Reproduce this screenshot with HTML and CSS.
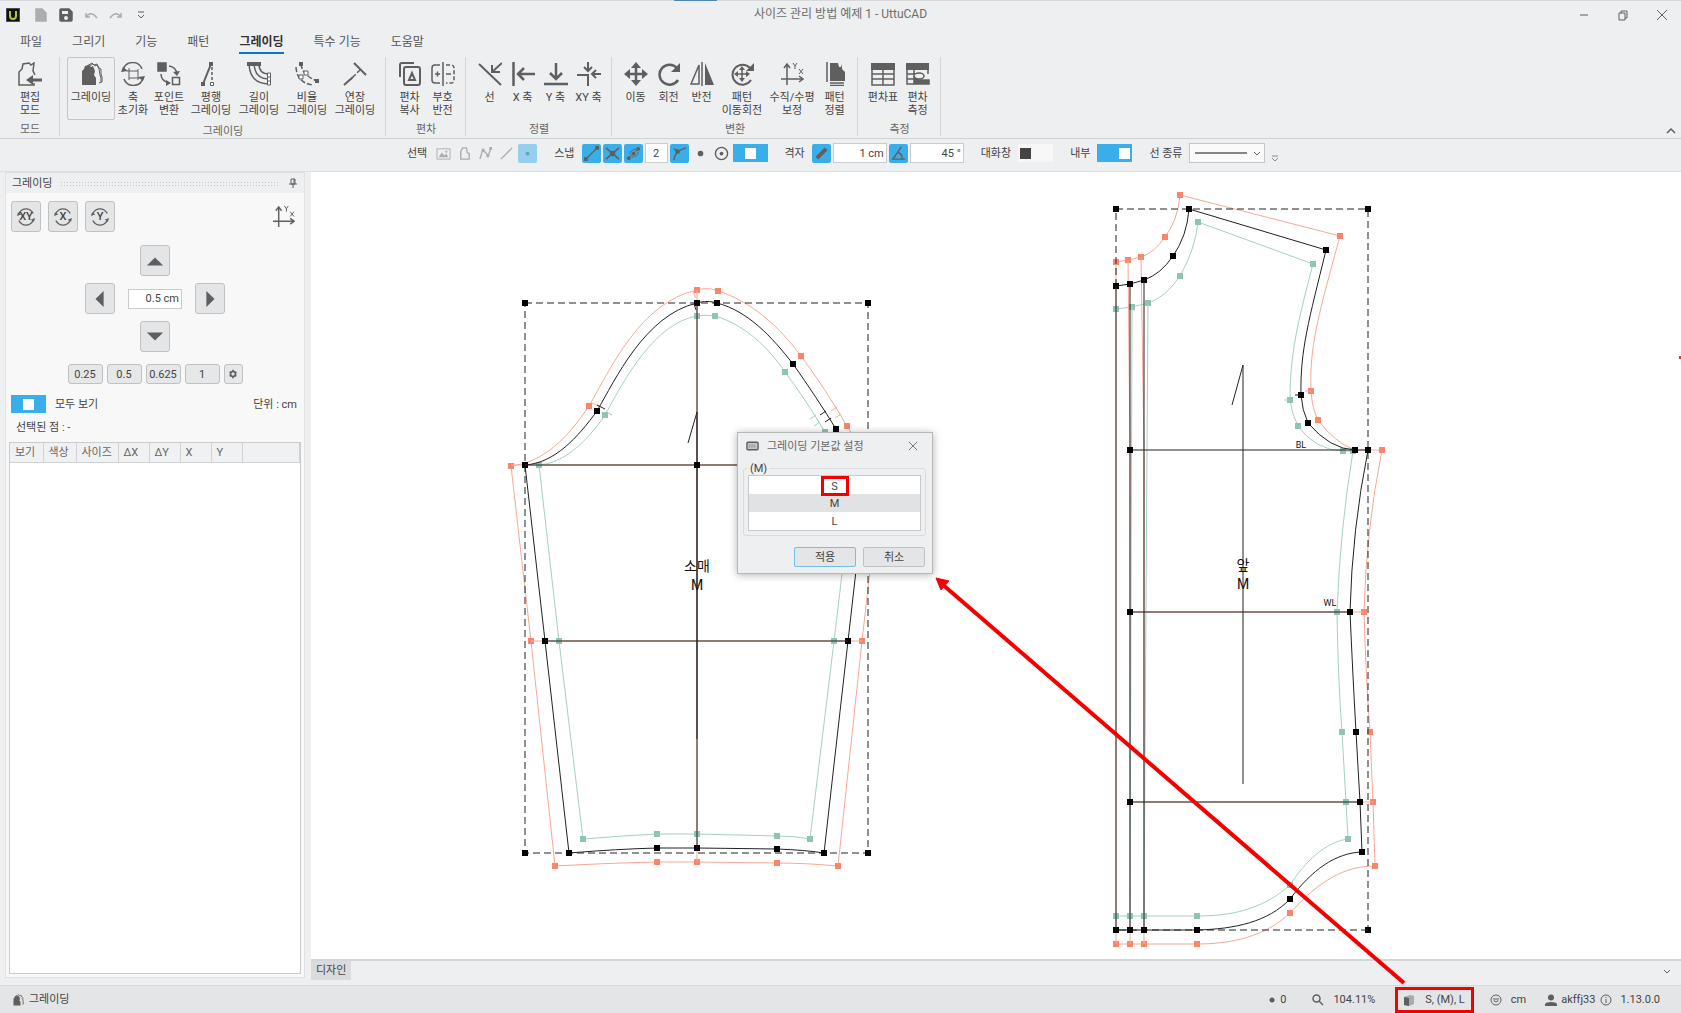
FILE: index.html
```html
<!DOCTYPE html>
<html lang="ko">
<head>
<meta charset="utf-8">
<title>사이즈 관리 방법 예제 1 - UttuCAD</title>
<link rel="stylesheet" href="styles.css">
</head>
<body>
<svg class="defs" aria-hidden="true">
  <defs>
    <marker id="node-black" markerUnits="userSpaceOnUse" markerWidth="6" markerHeight="6" refX="3" refY="3"><rect width="6" height="6" fill="#000" stroke="none"/></marker>
    <marker id="node-coral" markerUnits="userSpaceOnUse" markerWidth="6" markerHeight="6" refX="3" refY="3"><rect width="6" height="6" fill="#f9866b" stroke="none"/></marker>
    <marker id="node-green" markerUnits="userSpaceOnUse" markerWidth="6" markerHeight="6" refX="3" refY="3"><rect width="6" height="6" fill="#8fc3b4" stroke="none"/></marker>
    <symbol id="i-axis" viewBox="0 0 24 24"><path d="M7 23V3M1 17h21M4 6l3-4 3 4M19 14l4 3-4 3" /><path d="M13 1l2 3 2-3M15 4v3M19 7l4 5M23 7l-4 5" stroke-width="1"/></symbol>
    <symbol id="i-stack" viewBox="0 0 24 24"><path d="M8 4l5-3 2 2 3-1 2 4 2 1v5l1 3v5l-3 1M8 5l6-3 2 2 2-1 2 4 1 6 1 3v4" stroke-width="1"/><path d="M3 9l2-2 1-3 4-1 2 2 2-1 2 5-1 4 2 3v7H3z" class="f" stroke="none"/></symbol>
  </defs>
</svg>
<div class="app">
  <header class="titlebar">
    <div class="quick">
      <svg class="logo" viewBox="0 0 14 14"><rect width="14" height="14" fill="#111"/><path d="M4 3v5q0 3 3 3t3-3V3" fill="none" stroke="#a9c83f" stroke-width="2"/></svg>
      <button aria-label="새 문서" class="q"><svg viewBox="0 0 12 14" class="dim"><path d="M1 1h6l4 4v8H1z" class="f"/></svg></button>
      <button aria-label="저장" class="q"><svg viewBox="0 0 14 14"><path d="M1 2q0-1 1-1h8l3 3v8q0 1-1 1H2q-1 0-1-1z" class="f"/><path d="M3 3h6v3H3z" fill="#eee" stroke="none"/><circle cx="7" cy="10" r="2" fill="#eee" stroke="none"/></svg></button>
      <button aria-label="실행 취소" class="q"><svg viewBox="0 0 14 14" class="dim"><path d="M2 5v4h4M2 9q5-7 11 1"/></svg></button>
      <button aria-label="다시 실행" class="q"><svg viewBox="0 0 14 14" class="dim"><path d="M12 5v4H8M12 9Q7 2 1 10"/></svg></button>
      <button aria-label="도구 모음" class="q"><svg viewBox="0 0 14 14"><path d="M4 4h6M4 7l3 3 3-3" stroke-width="1"/></svg></button>
    </div>
    <h1>사이즈 관리 방법 예제 1 - UttuCAD</h1>
    <div class="wincontrols">
      <button aria-label="최소화"><svg viewBox="0 0 12 12"><path d="M2 6h8" stroke-width="1"/></svg></button>
      <button aria-label="복원"><svg viewBox="0 0 12 12"><path d="M2 4h6v7H2zM4 4V2h6v7H8" stroke-width="1"/></svg></button>
      <button aria-label="닫기"><svg viewBox="0 0 12 12"><path d="M1 1l10 10M11 1L1 11" stroke-width="1"/></svg></button>
    </div>
    <span class="topmark"></span>
  </header>

  <nav class="tabs">
    <a href="#">파일</a><a href="#">그리기</a><a href="#">기능</a><a href="#">패턴</a><a href="#" class="on">그레이딩</a><a href="#">특수 기능</a><a href="#">도움말</a>
  </nav>

  <div class="ribbon">
    <section class="group">
      <div class="tools">
        <button class="tool w46"><svg viewBox="0 0 24 24"><path d="M16 21v2H1V10l3-3 1-5 6-1 2 2 3-2-1 8 2 4" stroke-width="1.500"/><path d="M14 18h10" stroke-width="3"/><path d="M8 18l7-5v10z" class="f" stroke="none"/></svg><span>편집<br>모드</span></button>
      </div><h2>모드</h2>
    </section>
    <section class="group">
      <div class="tools">
        <button class="tool w48 sel"><svg><use href="#i-stack"/></svg><span>그레이딩</span></button>
        <button class="tool w36"><svg viewBox="0 0 24 24"><path d="M2 8A10 10 0 0 1 21 7M22 16A10 10 0 0 1 3 17"/><path d="M0 10l2-5 5 4zM24 14l-2 5-5-4z" class="f" stroke="none"/><path d="M8 6v12M17 7v11M6 9h11M8 16h11" stroke-width="1"/></svg><span>축<br>초기화</span></button>
        <button class="tool w36"><svg viewBox="0 0 24 24"><path d="M1 1h8v8H1z" class="f"/><path d="M15.500 15.500h7v7h-7zM12 4q7 1 8 8M4 12q0 7 8 9"/><path d="M16 10l4 4 3-5zM9 18l5 3-5 3z" class="f" stroke="none"/></svg><span>포인트<br>변환</span></button>
        <button class="tool w48"><svg viewBox="0 0 24 24"><path d="M12 2L4 22" stroke-width="2"/><path d="M13 5v15" stroke-dasharray="3 2"/><path d="M10 0h4v4h-4zM2 20h4v4H2z" class="f" stroke="none"/><path d="M11.500 20.500h3v3h-3z" fill="#fff" stroke-width="1"/></svg><span>평행<br>그레이딩</span></button>
        <button class="tool w48"><svg viewBox="0 0 24 24"><path d="M2 2q1 20 20 20M7 2q1 15 15 15M12 2q0 10 10 10"/><path d="M0 0h14v4H0z" class="f" stroke="none"/><path d="M20.500 11h3v12h-3zM20.500 15h3M20.500 19h3" fill="#fff" stroke-width="1"/></svg><span>길이<br>그레이딩</span></button>
        <button class="tool w48"><svg viewBox="0 0 24 24"><path d="M1 5q1 16 17 18M6 2q1 11 16 17" stroke-dasharray="5 2"/><path d="M4 0h4v4H4zM20 17h4v4h-4z" class="f" stroke="none"/><path d="M9 9h4v4H9zM4 13h4v4H4z" fill="#fff" stroke-width="1"/></svg><span>비율<br>그레이딩</span></button>
        <button class="tool w48"><svg viewBox="0 0 24 24"><path d="M11 1l12 12" stroke-width="2"/><path d="M17 8L8 17" stroke-dasharray="4 2"/><path d="M10 15l-9 8" stroke-width="2"/></svg><span>연장<br>그레이딩</span></button>
      </div><h2>그레이딩</h2>
    </section>
    <section class="group">
      <div class="tools">
        <button class="tool w33"><svg viewBox="0 0 24 24"><path d="M2 15V3q0-2 2-2h12M8 5h12q2 0 2 2v14q0 2-2 2H8q-2 0-2-2V7q0-2 2-2zM14 11l-3 7h6z" stroke-width="2"/></svg><span>편차<br>복사</span></button>
        <button class="tool w33"><svg viewBox="0 0 24 24"><path d="M12 0v24M9 3H4Q1 3 1 6v12q0 3 3 3h5M4 12h5M6.500 9.500v5"/><path d="M15 3h5q3 0 3 3v12q0 3-3 3h-5" stroke-dasharray="4 2"/><path d="M15 12h5"/></svg><span>부호<br>반전</span></button>
      </div><h2>편차</h2>
    </section>
    <section class="group">
      <div class="tools">
        <button class="tool w33"><svg viewBox="0 0 24 24"><path d="M1 2l22 21M24 1l-10 9M14 3v7h8" stroke-width="2"/></svg><span>선</span></button>
        <button class="tool w33"><svg viewBox="0 0 24 24"><path d="M2.500 0v24M24 12H7M13 6l-6 6 6 6" stroke-width="2.500"/></svg><span>X 축</span></button>
        <button class="tool w33"><svg viewBox="0 0 24 24"><path d="M0 22h24M12 1v16M6 11l6 6 6-6" stroke-width="2.500"/></svg><span>Y 축</span></button>
        <button class="tool w33"><svg viewBox="0 0 24 24"><path d="M0 13h11v11M11 0v8M7 5l4 4 4-4M24 12h-8M19 8l-4 4 4 4" stroke-width="2"/></svg><span>XY 축</span></button>
      </div><h2>정렬</h2>
    </section>
    <section class="group">
      <div class="tools">
        <button class="tool w33"><svg viewBox="0 0 24 24"><path d="M12 3v18M3 12h18" stroke-width="2.500"/><path d="M12 0l5 6H7zM12 24l5-6H7zM0 12l6-5v10zM24 12l-6-5v10z" class="f" stroke="none"/></svg><span>이동</span></button>
        <button class="tool w33"><svg viewBox="0 0 24 24"><path d="M21 18A10 10 0 1 1 20 6" stroke-width="2.500"/><path d="M23 1v9h-9z" class="f" stroke="none"/></svg><span>회전</span></button>
        <button class="tool w33"><svg viewBox="0 0 24 24"><path d="M12 0v24"/><path d="M9 3v19H1z"/><path d="M15 1v22h9z" class="f" stroke="none"/></svg><span>반전</span></button>
        <button class="tool w48"><svg viewBox="0 0 24 24"><path d="M21 18A10 10 0 1 1 20 6" stroke-width="2"/><path d="M24 1v8h-8z" class="f" stroke="none"/><path d="M12 6v12M6 12h12" stroke-width="1.500"/><path d="M12 4l3 4H9zM12 20l3-4H9zM4 12l4-3v6zM20 12l-4-3v6z" class="f" stroke="none"/></svg><span>패턴<br>이동회전</span></button>
        <button class="tool w52"><svg><use href="#i-axis"/></svg><span>수직/수평<br>보정</span></button>
        <button class="tool w33"><svg viewBox="0 0 24 24"><path d="M4 0v20M7 21h14M7 23.500h14" stroke-width="1.500"/><path d="M7 1h8l1 4 2 0 1-3v5l3 3v9H7z" class="f" stroke="none"/></svg><span>패턴<br>정렬</span></button>
      </div><h2>변환</h2>
    </section>
    <section class="group">
      <div class="tools">
        <button class="tool w36"><svg viewBox="0 0 24 24"><path d="M1 2h22v21H1zM1 12h22M1 17h22M12 7v16"/><path d="M0 1h24v7H0z" class="f" stroke="none"/></svg><span>편차표</span></button>
        <button class="tool w33"><svg viewBox="0 0 24 24"><path d="M8 22H1V2h21v10M1 12h8M1 17h7M8 7v6"/><path d="M0 1h23v7H0z" class="f" stroke="none"/><ellipse cx="13" cy="14" rx="5" ry="3"/><path d="M8 14v8h15v-4h-9q-4 0-6-3" class="f"/></svg><span>편차<br>측정</span></button>
      </div><h2>측정</h2>
    </section>
    <button class="collapse" aria-label="리본 접기"><svg viewBox="0 0 10 10"><path d="M1 7l4-4 4 4"/></svg></button>
  </div>

  <div class="optbar">
    <span class="lbl">선택</span>
    <button class="o" aria-label="이미지"><svg viewBox="0 0 16 16" class="dim"><path d="M1 3h14v11H1z" stroke-width="1"/><path d="M3 12l3-5 3 3 2-2 2 4zM10 5h2v2h-2z" class="f" stroke="none"/></svg></button>
    <button class="o" aria-label="패턴"><svg viewBox="0 0 16 16" class="dim"><path d="M4 14V6l2-4h4l1 5 2 1v6z"/></svg></button>
    <button class="o" aria-label="연속선"><svg viewBox="0 0 16 16" class="dim"><path d="M2 14L5 4l6 6 3-8"/><path d="M4 3h3v3H4zM12 1h3v3h-3zM9 9h3v3H9z" class="f" stroke="none"/></svg></button>
    <button class="o" aria-label="선"><svg viewBox="0 0 16 16" class="dim"><path d="M2 14L14 2"/></svg></button>
    <button class="o pale" aria-label="점"><svg viewBox="0 0 16 16"><circle cx="8" cy="8" r="2" fill="#6e9db6" stroke="none"/></svg></button>
    <span class="lbl">스냅</span>
    <button class="o blue" aria-label="끝점"><svg viewBox="0 0 16 16"><path d="M2 14L14 2"/><path d="M0 12h4v4H0zM12 0h4v4h-4z" class="f" stroke="none"/></svg></button>
    <button class="o blue" aria-label="교차점"><svg viewBox="0 0 16 16"><path d="M1 2l14 12M15 2L1 14"/><circle cx="8" cy="8" r="3" class="f" stroke="none"/></svg></button>
    <button class="o blue" aria-label="등분점"><svg viewBox="0 0 16 16"><path d="M2 14L14 2M4 9q0-5 8-6M6 12q7-1 7-6" stroke-width="1"/><circle cx="3" cy="13" r="2" class="f" stroke="none"/><circle cx="8" cy="8" r="2" class="f" stroke="none"/><circle cx="13" cy="3" r="2" class="f" stroke="none"/></svg></button>
    <input class="num n24 mid" aria-label="등분 수" value="2">
    <button class="o blue" aria-label="곡선"><svg viewBox="0 0 16 16"><path d="M2 15Q3 5 15 2M2 3l6 3"/><circle cx="6" cy="6" r="2.500" class="f" stroke="none"/></svg></button>
    <button class="o" aria-label="점 스냅"><svg viewBox="0 0 16 16"><circle cx="8" cy="8" r="3" class="f" stroke="none"/></svg></button>
    <button class="o" aria-label="중심점"><svg viewBox="0 0 16 16"><circle cx="8" cy="8" r="6.500"/><circle cx="8" cy="8" r="2" class="f" stroke="none"/></svg></button>
    <input type="checkbox" class="toggle half" aria-label="스냅" checked>
    <label class="lbl" for="grid">격자</label>
    <button class="o blue" aria-label="격자 자"><svg viewBox="0 0 16 16"><path d="M3 13L13 3" stroke-width="4"/></svg></button>
    <input id="grid" class="num n54" value="1 cm">
    <button class="o blue" aria-label="각도"><svg viewBox="0 0 16 16"><path d="M11 1L2 14h13M7 7q5 1 5 7"/></svg></button>
    <input class="num n54" aria-label="각도 값" value="45 °">
    <label class="lbl" for="dlg">대화창</label>
    <input id="dlg" type="checkbox" class="toggle">
    <label class="lbl" for="inn">내부</label>
    <input id="inn" type="checkbox" class="toggle" checked>
    <label class="lbl" for="line">선 종류</label>
    <span class="combo"><select id="line"><option label=" "></option></select><svg viewBox="0 0 76 20"><path d="M6 10h52"/><path d="M65 9l3 3 3-3" stroke-width="1"/></svg></span>
    <svg class="more" viewBox="0 0 8 8"><path d="M1 2h6M1 4l3 3 3-3" stroke-width="1"/></svg>
  </div>

  <main class="work">
    <aside class="panel">
      <div class="phead"><h3>그레이딩</h3><span class="grip"></span><svg viewBox="0 0 10 10"><path d="M3 1h4v5H3zM1 6h8M5 6v4M6 1v5" stroke-width="1"/></svg></div>
      <div class="pbody">
        <div class="resets">
          <button class="sq" aria-label="XY 초기화"><svg viewBox="0 0 20 20"><path d="M2 6Q5 1 10 1t8 5M18 14q-3 5-8 5t-8-5"/><path d="M0 9l1-4 4 2zM20 11l-1 4-4-2z" class="f" stroke="none"/></svg><b>XY</b></button>
          <button class="sq" aria-label="X 초기화"><svg viewBox="0 0 20 20"><path d="M2 6Q5 1 10 1t8 5M18 14q-3 5-8 5t-8-5"/><path d="M0 9l1-4 4 2zM20 11l-1 4-4-2z" class="f" stroke="none"/></svg><b>X</b></button>
          <button class="sq" aria-label="Y 초기화"><svg viewBox="0 0 20 20"><path d="M2 6Q5 1 10 1t8 5M18 14q-3 5-8 5t-8-5"/><path d="M0 9l1-4 4 2zM20 11l-1 4-4-2z" class="f" stroke="none"/></svg><b>Y</b></button>
          <svg class="axis"><use href="#i-axis"/></svg>
        </div>
        <div class="pad">
          <button class="sq up" aria-label="위"><svg viewBox="0 0 20 20"><path d="M10 6l9 9H1z" class="f" stroke="none"/></svg></button>
          <button class="sq left" aria-label="왼쪽"><svg viewBox="0 0 20 20"><path d="M5 10l9-9v18z" class="f" stroke="none"/></svg></button>
          <input class="num n54 step" aria-label="이동량" value="0.5 cm">
          <button class="sq right" aria-label="오른쪽"><svg viewBox="0 0 20 20"><path d="M15 10L6 1v18z" class="f" stroke="none"/></svg></button>
          <button class="sq down" aria-label="아래"><svg viewBox="0 0 20 20"><path d="M10 14L1 5h18z" class="f" stroke="none"/></svg></button>
        </div>
        <div class="presets">
          <button>0.25</button><button>0.5</button><button>0.625</button><button>1</button>
          <button class="gear" aria-label="설정"><svg viewBox="0 0 12 12"><circle cx="6" cy="6" r="3" stroke-width="2"/><path d="M6 1v2M6 9v2M2 3.500l2 1M8 7.500l2 1M10 3.500l-2 1M4 7.500l-2 1" stroke-width="2"/></svg></button>
        </div>
        <div class="showall"><input id="all" type="checkbox" class="toggle half" checked><label for="all">모두 보기</label><span>단위 : cm</span></div>
        <p class="picked">선택된 점 : -</p>
        <div class="grid">
          <table>
            <colgroup><col class="c33"><col class="c33"><col class="c42"><col class="c31"><col class="c31"><col class="c31"><col class="c31"><col></colgroup>
            <thead><tr><th>보기</th><th>색상</th><th>사이즈</th><th>ΔX</th><th>ΔY</th><th>X</th><th>Y</th><th></th></tr></thead>
          </table>
        </div>
      </div>
    </aside>

    <section class="stage">
      <div class="canvas">
        <svg class="drawing" viewBox="311 172 1370 786" preserveAspectRatio="xMinYMin meet">
          <g class="coral">
            <path class="n" d="M511 466C545 462 568 437 589 406C610 370 640 302 697 290C704 288 711 288 718 291C750 301 778 325 801 356C816 376 833 402 847 426C860 448 872 460 882 465L862 641L838 866Q805 863 777 863L697 862H657Q610 863 555 866L531 641Z"/>
            <path d="M511 465H882M531 641H862M697 290V862M592 403l8 4M831 411l6-4M835 418l6-4M693 292l3 6"/>
            <path class="n" d="M1116 262L1128 260L1141 257Q1154 253 1165 237Q1178 220 1180 195L1340 236C1320 310 1309 345 1311 391Q1312 408 1318 420Q1334 442 1355 450H1382Q1366 530 1364 612Q1366 680 1370 732L1373 802L1375 866C1345 866 1320 880 1290 913C1265 937 1230 944 1197 944H1144H1130H1116"/>
            <path d="M1116 262V944M1128 260L1130 450V944M1141 257L1144 450V944M1130 612H1364M1130 802H1373M1305 391h6"/>
          </g>
          <g class="green">
            <path class="n" d="M539 465C565 463 588 440 605 415C625 378 655 323 697 316C703 315 709 315 715 316C745 325 768 347 785 372C800 392 813 412 825 432C835 448 845 460 855 465L834 641L810 839Q795 836 777 836L697 834H657Q618 836 583 839L559 641Z"/>
            <path d="M608 413l4 2M810 419l6-4M814 426l6-4"/>
            <path class="n" d="M1116 309L1132 307L1148 303Q1165 298 1180 276Q1195 250 1198 222L1313 264C1297 325 1290 355 1290 400Q1292 415 1298 426Q1315 450 1343 451H1353Q1340 530 1337 612Q1338 680 1342 732L1346 802L1348 839C1325 842 1305 862 1290 885C1262 910 1230 916 1197 916H1144H1130H1116"/>
            <path d="M1132 307L1130 916M1148 303L1147 450L1144 916M1284 400h6"/>
          </g>
          <g class="black">
            <path class="bbox n" d="M525 303H868V853H525Z"/>
            <path class="bbox n" d="M1116 209H1368V930"/>
            <path class="bbox" d="M1116 286V209M1368 930H1116"/>
            <path class="n" d="M525 465C555 463 578 437 597 411C615 380 645 315 697 303C703 301 711 301 717 303C748 311 772 337 793 364C808 385 825 411 836 429C848 448 860 460 868 465L848 641L824 853Q805 850 777 849L697 848H657Q618 849 569 853L545 641Z"/>
            <path d="M525 465H868M545 641H848M697 303V848M697 412V739M697 412L688 443M597 405l8 4M820 415l6-4M825 422l6-4M694 304l2 6"/>
            <path class="n" d="M697 465h0"/>
            <path class="n" d="M1116 286L1130 284L1144 280Q1161 274 1173 256Q1187 236 1189 209L1326 250C1309 320 1300 350 1301 395Q1302 410 1308 423Q1330 449 1355 450H1368Q1352 530 1350 612Q1353 680 1356 732L1360 802L1362 852C1335 853 1312 870 1290 899C1268 922 1235 929 1197 930H1144H1130H1116"/>
            <path d="M1116 286V930M1130 284V930M1144 280V930M1243 365V784M1243 365L1232 405M1295 395h6"/>
            <path class="n s" d="M1130 450H1355M1130 612H1350M1130 802H1360"/>
          </g>
          <g class="names"><text x="697" y="571">소매</text><text x="697" y="590">M</text><text x="1243" y="570">앞</text><text x="1243" y="589">M</text></g>
          <g class="marks"><text x="1301" y="448">BL</text><text x="1330" y="606">WL</text></g>
        </svg>
        <div class="dialog" role="dialog" aria-label="그레이딩 기본값 설정">
          <div class="dhead"><svg viewBox="0 0 14 12"><rect x="1" y="2" width="12" height="8" rx="1" fill="#c4c6c8"/><path d="M3 5h8M3 7h8" stroke="#777" stroke-width="1" stroke-dasharray="1 1"/></svg><h3>그레이딩 기본값 설정</h3><button aria-label="닫기"><svg viewBox="0 0 12 12"><path d="M1 1l10 10M11 1L1 11" stroke-width="1"/></svg></button></div>
          <fieldset><legend>(M)</legend>
            <ul><li><button class="hot">S</button></li><li class="cur"><button>M</button></li><li><button>L</button></li></ul>
          </fieldset>
          <div class="dfoot"><button class="primary">적용</button><button>취소</button></div>
        </div>
        <span class="edge"></span>
      </div>
      <div class="sheets"><button class="sheet">디자인</button><svg viewBox="0 0 10 10"><path d="M2 3l3 3 3-3" stroke-width="1"/></svg></div>
    </section>
  </main>

  <footer class="status">
    <span class="item"><svg><use href="#i-stack"/></svg>그레이딩</span>
    <span class="fill"></span>
    <span class="item"><svg class="tiny" viewBox="0 0 6 6"><circle cx="3" cy="3" r="2.500" class="f" stroke="none"/></svg>0</span>
    <span class="item zoom"><svg viewBox="0 0 12 12"><circle cx="4.500" cy="4.500" r="3.500"/><path d="M7 7l4 4"/></svg>104.11%</span>
    <span class="item boxed"><svg viewBox="0 0 12 12"><path d="M1 3l6-2 4 1v8l-5 2-5-1z" fill="#aaa" stroke="none"/><path d="M1 3l5 1v8l-5-1z" class="f" stroke="none"/></svg>S, (M), L</span>
    <span class="item unit"><svg viewBox="0 0 12 12"><circle cx="6" cy="6" r="5" stroke-width="1"/><path d="M4 4v2q0 2 2 2t2-2V4M6 4v2" stroke-width="1"/></svg>cm</span>
    <span class="item user"><svg viewBox="0 0 12 12"><circle cx="6" cy="3.500" r="3" class="f" stroke="none"/><path d="M0 12V10q1-2 6-2t6 2v2z" class="f" stroke="none"/></svg>akffj33</span>
    <span class="item ver"><svg viewBox="0 0 12 12"><circle cx="6" cy="6" r="5" stroke-width="1"/><path d="M6 5v4M6 3v1" stroke-width="1"/></svg>1.13.0.0</span>
  </footer>
  <svg class="callout" viewBox="0 0 1681 1013" preserveAspectRatio="xMinYMin meet"><path d="M1404 983L942 584" stroke="#f40000" stroke-width="4" fill="none"/><path d="M936 578l13 3-8 9z" fill="#f40000" stroke="#f40000" stroke-width="1"/></svg>
</div>
</body>
</html>
```

FILE: styles.css
```css
* { box-sizing: border-box; }
body { margin: 0; background: #eeeff1; color: #444; font: 11px/13px Roboto, "Noto Sans CJK KR", sans-serif; }
h1, h2, h3, p, ul { margin: 0; padding: 0; font-weight: 400; font-size: inherit; list-style: none; }
button, input, select { font: inherit; color: inherit; margin: 0; padding: 0; border: 0; background: none; }
svg { display: block; flex: none; fill: none; stroke: #5f5f5f; stroke-width: 1.5; }
.f { fill: #5f5f5f; }
.defs { position: absolute; width: 0; height: 0; }
.dim { opacity: .45; }

.app { position: relative; height: 100vh; display: flex; flex-direction: column; overflow: hidden; }

.titlebar { position: relative; height: 28px; flex: none; display: grid; grid-template-columns: 1fr auto 1fr; align-items: center; color: #6d6d6d; font-size: 12px; border-top: 1px solid #d6d8da; }
.quick { display: flex; align-items: center; gap: 11px; padding-left: 6px; }
.quick svg { width: 14px; height: 14px; }
.quick .logo { margin-right: 3px; }
.wincontrols { display: flex; justify-content: flex-end; gap: 27px; padding-right: 13px; }
.wincontrols svg { width: 12px; height: 12px; }
.topmark { position: absolute; top: -1px; left: 674px; width: 43px; height: 1px; background: #4f86b4; }

.tabs { height: 27px; flex: none; display: flex; gap: 30px; padding-left: 20px; font-size: 12px; }
.tabs a { color: #555; text-decoration: none; line-height: 28px; height: 26px; border-bottom: 2px solid transparent; }
.tabs .on { color: #333; font-weight: 700; border-color: #0f73c0; }

.ribbon { height: 84px; flex: none; display: flex; padding-top: 2px; border-bottom: 1px solid #cfd1d3; }
.group { display: flex; flex-direction: column; padding: 0 6px 0 7px; height: 79px; border-right: 1px solid #d3d5d7; }
.tools { display: flex; height: 65px; }
.tool { display: flex; flex-direction: column; align-items: center; border: 1px solid transparent; border-radius: 2px; padding-top: 4px; white-space: nowrap; }
.tool svg { width: 24px; height: 24px; }
.tool span { margin-top: 5px; }
.sel { border-color: #c4c6c8; height: 63px; }
.w33 { width: 33px; } .w36 { width: 36px; } .w46 { width: 46px; } .w48 { width: 48px; } .w52 { width: 52px; }
.group h2 { text-align: center; margin-top: 5px; color: #666; }
.collapse { margin: auto 5px 2px auto; }
.collapse svg { width: 10px; height: 10px; }

.optbar { height: 33px; flex: none; display: flex; align-items: center; gap: 2px; padding: 0 0 4px 392px; border-bottom: 1px solid #dddfe0; }
.lbl { margin: 0 5px 0 15px; white-space: nowrap; }
.o { width: 19px; height: 19px; display: grid; place-items: center; border-radius: 2px; }
.o svg { width: 15px; height: 15px; }
.blue { background: #3aaee9; }
.pale { background: #94cff0; }
.num { height: 20px; border: 1px solid #c9cbcd; background: #fff; text-align: right; padding: 0 2px; }
.n24 { width: 23px; } .n54 { width: 54px; } .mid { text-align: center; }
.toggle { appearance: none; width: 35px; height: 18px; background: #f7f7f7; display: flex; align-items: center; padding: 0 2px; }
.toggle::before { content: ""; width: 11px; height: 11px; background: #444; }
.toggle:checked { background: #3aaee9; justify-content: flex-end; }
.toggle:checked::before { background: #fff; }
.toggle.half:checked { justify-content: center; }
.combo { position: relative; width: 76px; height: 20px; }
.combo select { appearance: none; width: 76px; height: 20px; border: 1px solid #c4c6c8; background: #fafafa; }
.combo svg { position: absolute; inset: 0; pointer-events: none; }
.more { width: 8px; height: 8px; margin: 10px 0 0 4px; opacity: .7; }

.work { flex: 1; min-height: 0; display: flex; gap: 6px; padding-left: 5px; }
.panel { width: 300px; flex: none; display: flex; flex-direction: column; border: 1px solid #dfe1e2; margin-bottom: 7px; background: #f8f8f8; }
.phead { height: 20px; display: flex; align-items: center; gap: 8px; padding: 0 6px; background: #eeeff0; }
.phead svg { width: 10px; height: 10px; }
.grip { flex: 1; height: 5px; background: radial-gradient(circle, #c0c2c4 30%, transparent 45%) 0 0 / 3px 3px; }
.pbody { flex: 1; display: flex; flex-direction: column; padding: 8px 3px 3px; }
.resets { display: flex; gap: 7px; padding: 0 6px 0 2px; align-items: center; }
.sq { position: relative; width: 30px; height: 31px; display: grid; place-items: center; border: 1px solid #bfc1c3; border-radius: 3px; background: #e4e5e6; }
.sq svg { width: 18px; height: 18px; }
.sq b { position: absolute; inset: 8px 0; text-align: center; font-weight: 500; }
.axis { width: 23px; height: 23px; margin-left: auto; }
.pad { display: grid; grid-template-columns: 30px 54px 30px; grid-template-rows: repeat(3, 31px); grid-template-areas: ". u ." "l n r" ". d ."; gap: 7px 13px; place-content: center; place-items: center; margin: 13px 0 12px; }
.up { grid-area: u; } .left { grid-area: l; } .step { grid-area: n; } .right { grid-area: r; } .down { grid-area: d; }
.presets { display: flex; justify-content: center; gap: 4px; }
.presets button { width: 35px; height: 20px; border: 1px solid #bfc1c3; border-radius: 3px; background: #e6e7e8; }
.presets .gear { width: 19px; display: grid; place-items: center; }
.gear svg { width: 10px; height: 10px; }
.showall { display: flex; align-items: center; gap: 9px; margin-top: 11px; padding: 0 4px 0 2px; }
.showall span { margin-left: auto; }
.picked { margin: 8px 0 8px 7px; }
.grid { flex: 1; border: 1px solid #c9cbcd; background: #fff; }
table { width: 100%; table-layout: fixed; border-collapse: collapse; }
th { height: 19px; padding: 0 5px; text-align: left; font-weight: 400; white-space: nowrap; background: #f0f1f2; border-right: 1px solid #d0d2d4; border-bottom: 1px solid #d0d2d4; color: #666; }
.c33 { width: 33px; } .c42 { width: 42px; } .c31 { width: 31px; }

.stage { flex: 1; min-width: 0; display: flex; flex-direction: column; }
.canvas { position: relative; flex: 1; min-height: 0; background: #fff; border-bottom: 2px solid #d4d6d8; overflow: hidden; }
.drawing { width: 100%; }
.drawing g path { stroke-width: 1; }
.drawing .coral { stroke: #f9a794; }
.drawing .green { stroke: #a6d0c4; }
.drawing .black { stroke: #222; }
.coral .n { marker: url(#node-coral); }
.green .n { marker: url(#node-green); }
.black .n { marker: url(#node-black); }
.drawing .bbox { stroke-dasharray: 7 4; }
.names text, .marks text { fill: #111; stroke: none; text-anchor: middle; font-size: 14px; }
.marks text { font-size: 9px; }
.edge { position: absolute; right: 0; top: 184px; width: 2px; height: 3px; background: #e33; }

.dialog { position: absolute; left: 426px; top: 260px; width: 196px; background: #eeeff1; border: 1px solid #b5b7b9; box-shadow: 0 1px 8px rgba(0,0,0,.3); padding: 0 6px 6px 5px; }
.dhead { display: flex; align-items: center; gap: 8px; height: 26px; padding: 0 8px 0 3px; color: #666; }
.dhead svg { width: 13px; height: 12px; }
.dhead button { margin-left: auto; }
.dhead button svg { width: 10px; height: 10px; }
fieldset { margin: 3px 0 0; padding: 0 4px 4px; border: 1px solid #d9dbdc; border-radius: 3px; min-width: 0; }
legend { padding: 0 2px; }
fieldset ul { border: 1px solid #c6c8ca; background: #fff; }
fieldset li { height: 18px; display: flex; justify-content: center; }
.cur { background: #e1e2e3; }
fieldset button { width: 28px; }
.hot { outline: 3px solid #f40000; outline-offset: -3px; height: 20px; }
.dfoot { display: flex; justify-content: flex-end; gap: 7px; margin-top: 11px; padding-right: 1px; }
.dfoot button { width: 62px; height: 20px; border: 1px solid #bfc1c3; border-radius: 2px; background: #e4e5e6; }
.dfoot .primary { border-color: #74bfe8; }

.sheets { height: 24px; flex: none; display: flex; align-items: flex-start; justify-content: space-between; padding-right: 9px; }
.sheet { height: 19px; padding: 0 5px; background: #d9dbdd; }
.sheets svg { width: 10px; height: 10px; margin-top: 6px; }

.status { height: 28px; flex: none; display: flex; align-items: center; background: #e3e5e6; border-top: 1px solid #d6d8da; padding: 0 21px 0 12px; }
.item { display: flex; align-items: center; gap: 5px; }
.item svg { width: 12px; height: 12px; }
.item .tiny { width: 6px; height: 6px; }
.fill { flex: 1; }
.zoom { margin-left: 26px; gap: 9px; }
.boxed { height: 26px; margin: 0 16px 0 20px; padding: 0 6px 0 5px; gap: 10px; border: 3px solid #f40000; }
.unit { gap: 9px; }
.user { margin-left: 19px; gap: 4px; }
.ver { margin-left: 5px; gap: 8px; }
.callout { position: absolute; left: 0; top: 0; width: 100%; pointer-events: none; }
```
